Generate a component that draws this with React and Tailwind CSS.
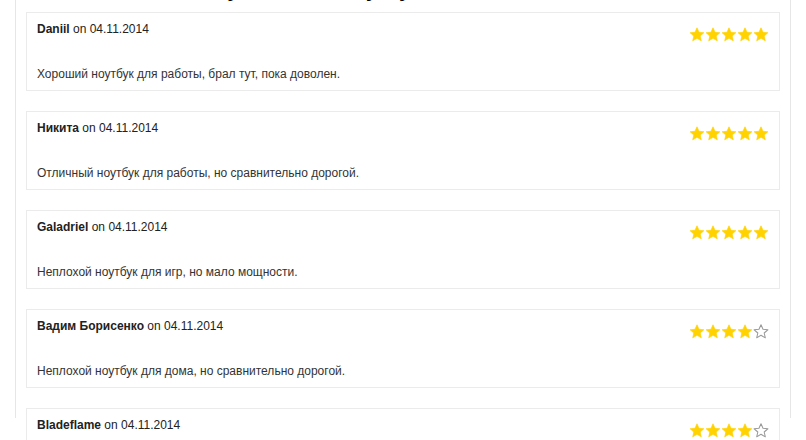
import React from "react";

const reviews = [
  { name: "Daniil", date: "04.11.2014", text: "Хороший ноутбук для работы, брал тут, пока доволен.", rating: 5 },
  { name: "Никита", date: "04.11.2014", text: "Отличный ноутбук для работы, но сравнительно дорогой.", rating: 5 },
  { name: "Galadriel", date: "04.11.2014", text: "Неплохой ноутбук для игр, но мало мощности.", rating: 5 },
  { name: "Вадим Борисенко", date: "04.11.2014", text: "Неплохой ноутбук для дома, но сравнительно дорогой.", rating: 4 },
  { name: "Bladeflame", date: "04.11.2014", text: "Хороший ноутбук, советую.", rating: 4 },
];

const Star = ({ filled }) => (
  <svg width="16" height="15" viewBox="0 0 24 23" className="block">
    <path
      d="M12 1.2l3.1 6.9 7.5.7-5.7 5 1.7 7.4L12 17.3l-6.6 3.9 1.7-7.4-5.7-5 7.5-.7z"
      fill={filled ? "#ffd200" : "none"}
      stroke={filled ? "#ffd200" : "#9a9a9a"}
      strokeWidth={filled ? 1 : 1.6}
      strokeLinejoin="round"
    />
  </svg>
);

const Stars = ({ rating }) => (
  <div className="flex">
    {[1, 2, 3, 4, 5].map((i) => (
      <Star key={i} filled={i <= rating} />
    ))}
  </div>
);

const ReviewCard = ({ name, date, text, rating }) => (
  <div className="shrink-0 h-[79px] border border-[#ebebeb] bg-white pl-[10px] pr-[10px] pt-[8px]">
    <div className="flex justify-between items-start">
      <div className="text-[12px] leading-[16px] text-[#222]">
        <span className="font-bold">{name}</span> on {date}
      </div>
      <div className="mt-[6px]">
        <Stars rating={rating} />
      </div>
    </div>
    <p className="mt-[24px] text-[12px] leading-[16px] text-[#333]">{text}</p>
  </div>
);

export default function App() {
  return (
    <div
      className="w-[806px] h-[440px] overflow-hidden bg-white"
      style={{ fontFamily: '"Liberation Sans", Arial, sans-serif' }}
    >
      <div className="mx-[15px] h-full border-x border-[#e6e6e6] px-[10px]">
        <h2 className="mt-[-22px] h-[34px] pl-[80px] text-[20px] leading-[24px] font-bold text-black">
          Отзывы покупателей о ноутбуке
        </h2>
        <div className="flex flex-col gap-[20px]">
          {reviews.map((r) => (
            <ReviewCard key={r.name} {...r} />
          ))}
        </div>
      </div>
    </div>
  );
}
